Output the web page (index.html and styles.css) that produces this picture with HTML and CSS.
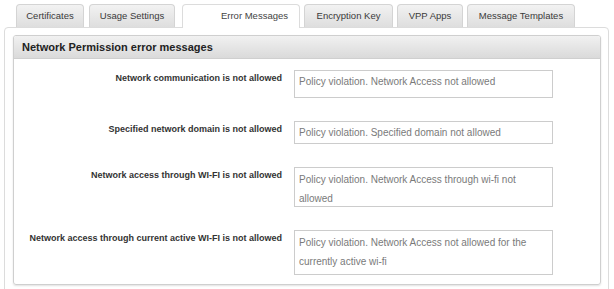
FILE: index.html
```html
<!DOCTYPE html>
<html lang="en">
<head>
	<meta charset="UTF-8">
	<title>Error Messages</title>
	<link rel="stylesheet" href="styles.css">
</head>
<body>
<div class="page">
	<ul class="tabs">
		<li class="tab-cert">Certificates</li>
		<li class="tab-usage">Usage Settings</li>
		<li class="tab-error active">Error Messages</li>
		<li class="tab-enc">Encryption Key</li>
		<li class="tab-vpp">VPP Apps</li>
		<li class="tab-msg">Message Templates</li>
	</ul>
	<div class="panel">
		<div class="group">
			<div class="group-title">Network Permission error messages</div>
			<div class="form">
				<label>Network communication is not allowed</label>
				<textarea class="h1">Policy violation. Network Access not allowed</textarea>

				<label>Specified network domain is not allowed</label>
				<textarea class="h2">Policy violation. Specified domain not allowed</textarea>

				<label>Network access through WI-FI is not allowed</label>
				<textarea class="h3">Policy violation. Network Access through wi-fi not allowed</textarea>

				<label>Network access through current active WI-FI is not allowed</label>
				<textarea class="h4">Policy violation. Network Access not allowed for the currently active wi-fi</textarea>
			</div>
		</div>
	</div>
</div>
</body>
</html>
```

FILE: styles.css
```css
body{
	margin: 0;
	background: #fff;
	font-family: "Liberation Sans", Arial, sans-serif;
	color: #333;
}
.page{
	padding: 4px 5px 0 4px;
}
.tabs{
	list-style: none;
	margin: 0 0 -1px 12px;
	padding: 0;
	display: flex;
	position: relative;
	z-index: 1;
}
.tabs li{
	height: 23px;
	line-height: 22px;
	margin-right: 5px;
	border: 1px solid #d4d4d4;
	border-bottom: 0;
	border-radius: 4px 4px 0 0;
	background: linear-gradient(#f2f2f2, #dedede);
	font-size: 9.5px;
	text-align: center;
	color: #3a3a3a;
	box-sizing: border-box;
}
.tabs .tab-cert{ width: 68px; }
.tabs .tab-usage{ width: 86px; margin-right: 7px; }
.tabs .tab-error{ width: 118px; margin-right: 4px; }
.tabs .tab-enc{ width: 89px; margin-right: 4px; }
.tabs .tab-vpp{ width: 66px; margin-right: 4px; }
.tabs .tab-msg{ width: 108px; }
.tabs .active{
	background: #fff;
	border-color: #dcdcdc;
	text-align: right;
	padding-right: 11px;
	height: 24px;
	color: #444;
}
.panel{
	border: 1px solid #dcdcdc;
	border-radius: 4px;
	padding: 7px 7px 14px 8px;
	background: #fff;
}
.group{
	border: 1px solid #cfcfcf;
	border-radius: 3px;
	box-shadow: 0 1px 2px rgba(0,0,0,0.12);
	overflow: hidden;
}
.group-title{
	height: 22px;
	line-height: 22px;
	padding-left: 8px;
	background: linear-gradient(#f1f1f1, #dadada);
	border-bottom: 1px solid #cfcfcf;
	font-size: 11px;
	font-weight: bold;
	color: #222;
}
.form{
	display: grid;
	grid-template-columns: 268px 259px;
	column-gap: 12px;
	row-gap: 23px;
	padding: 11px 0 9px 0;
}
.form label{
	text-align: right;
	font-size: 9px;
	font-weight: bold;
	line-height: 14px;
	padding-top: 1px;
	color: #333;
}
.form textarea{
	display: block;
	box-sizing: border-box;
	width: 259px;
	margin: 0;
	padding: 2px 4px;
	border: 1px solid #cccccc;
	font-family: "Liberation Sans", Arial, sans-serif;
	font-size: 10px;
	line-height: 19px;
	color: #7a7a7a;
	resize: none;
	overflow: hidden;
	background: #fff;
}
.form .h1{ height: 28px; padding-top: 1px; }
.form .h2{ height: 23px; padding-top: 1px; }
.form .h3{ height: 40px; }
.form .h4{ height: 45px; }
```
